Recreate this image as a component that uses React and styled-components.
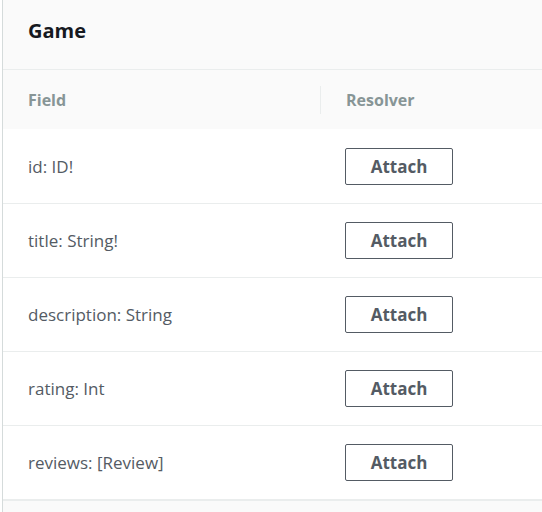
import React from "react";
import styled, { createGlobalStyle } from "styled-components";

const GlobalStyle = createGlobalStyle`
    html, body {
        margin: 0;
        padding: 0;
        background: #ffffff;
        font-family: "Open Sans", "Noto Sans", sans-serif;
    }
`;

const Page = styled.div`
    width: 542px;
    height: 512px;
    overflow: hidden;
    padding-left: 2px;
    box-sizing: border-box;
`;

const Panel = styled.div`
    width: 600px;
    border-left: 1px solid #d5dbdb;
    background: #fafafa;
    min-height: 512px;
`;

const Title = styled.h2`
    margin: 0;
    height: 70px;
    box-sizing: border-box;
    padding: 0 25px 8px;
    display: flex;
    align-items: center;
    font-size: 20px;
    font-weight: 700;
    color: #16191f;
    border-bottom: 1px solid #eaeded;
`;

const Table = styled.div`
    display: flex;
    flex-direction: column;
    border-bottom: 2px solid #eaeded;
`;

const HeadRow = styled.div`
    display: grid;
    grid-template-columns: 317px 1fr;
    height: 59px;
    align-items: center;
    background: #fafafa;
`;

const HeadCell = styled.div`
    display: flex;
    align-items: center;
    height: 28px;
    padding-left: 25px;
    font-size: 16px;
    font-weight: 700;
    color: #879596;
    border-left: ${(p) => (p.$divider ? "1px solid #eaeded" : "none")};
`;

const Row = styled.div`
    display: grid;
    grid-template-columns: 317px 1fr;
    height: 74px;
    align-items: center;
    background: #ffffff;
    border-top: ${(p) => (p.$first ? "none" : "1px solid #eaeded")};
    box-sizing: border-box;
`;

const FieldCell = styled.div`
    padding-left: 25px;
    font-size: 17px;
    color: #545b64;
`;

const ResolverCell = styled.div`
    padding-left: 25px;
`;

const Button = styled.button`
    width: 108px;
    height: 37px;
    border: 1px solid #545b64;
    border-radius: 2px;
    background: #ffffff;
    color: #545b64;
    font-family: "Open Sans", "Noto Sans", sans-serif;
    font-size: 17px;
    font-weight: 700;
    cursor: pointer;
    padding: 0;
`;

const fields = [
    "id: ID!",
    "title: String!",
    "description: String",
    "rating: Int",
    "reviews: [Review]",
];

export default function App() {
    return (
        <Page>
            <GlobalStyle />
            <Panel>
                <Title>Game</Title>
                <Table>
                    <HeadRow>
                        <HeadCell>Field</HeadCell>
                        <HeadCell $divider>Resolver</HeadCell>
                    </HeadRow>
                    {fields.map((f, i) => (
                        <Row key={f} $first={i === 0}>
                            <FieldCell>{f}</FieldCell>
                            <ResolverCell>
                                <Button>Attach</Button>
                            </ResolverCell>
                        </Row>
                    ))}
                </Table>
            </Panel>
        </Page>
    );
}
